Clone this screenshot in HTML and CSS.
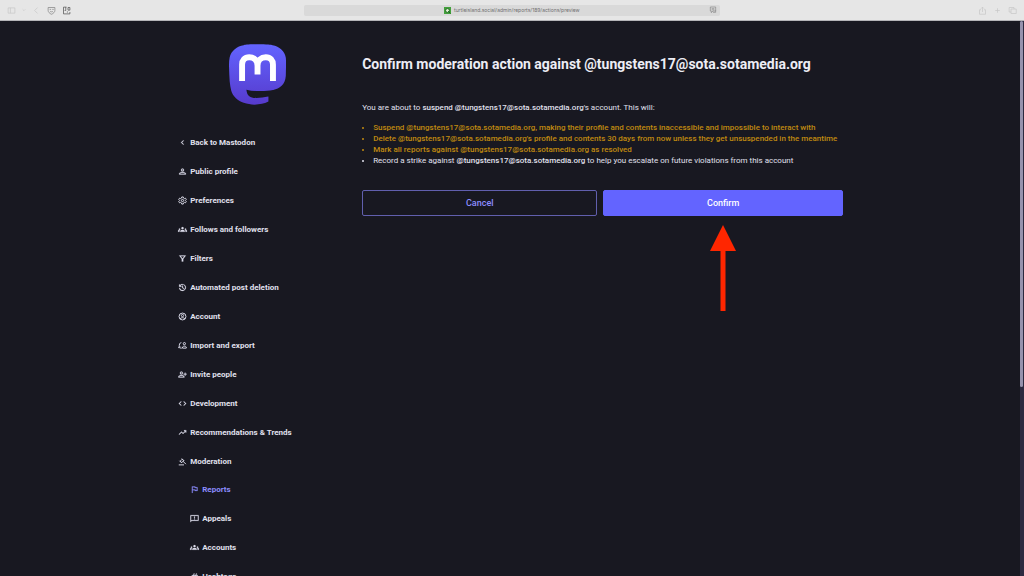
FILE: index.html
```
<!DOCTYPE html>
<html lang="en">
<head>
<meta charset="utf-8">
<meta name="viewport" content="width=device-width, initial-scale=1">
<title>Confirm moderation action</title>
<link rel="stylesheet" href="styles.css">
</head>
<body>
<header class="toolbar">
  <div class="tools">
    <svg class="tool faint" viewBox="0 0 12 12"><path d="M1.500 2.500h9v7h-9zM4.500 2.500v7"/></svg>
    <svg class="tool tiny" viewBox="0 0 12 12"><path d="M2 4l4 4 4-4"/></svg>
    <svg class="tool faint" viewBox="0 0 12 12"><path d="M7.500 2L3.500 6l4 4"/></svg>
    <svg class="tool shield" viewBox="0 0 12 12"><path d="M1.500 2h9v4c0 2-2 4-4.500 5-2.500-1-4.500-3-4.500-5zM3.500 4.500h2M7 4.500h2M4 7c1 1 3 1 4 0"/></svg>
    <svg class="tool dark" viewBox="0 0 12 12"><path d="M6 1.500H2v9h8.500V8M5 1.500v4.500H3.500M8 2h2.500v3.500H8zM6.500 8h1.500"/></svg>
  </div>
  <div class="address">
    <svg class="favicon" viewBox="0 0 12 12"><path fill="#43a03c" d="M0 0h12v12H0z"/><circle cx="6" cy="6" r="3.300" fill="#e7f2d8" stroke="#17631c" stroke-width="1.500"/><path d="M7 7l4 4" stroke="#17631c" stroke-width="1.500"/></svg>
    <span class="url">turtleisland.social/admin/reports/189/actions/preview</span>
    <svg class="tool translate" viewBox="0 0 12 12"><path d="M2 1.500h8v6H6L3.500 10V7.500H2zM4 4h4M4 5.800h4M6 9.500h4V7"/></svg>
  </div>
  <div class="tools tools-end">
    <svg class="tool faint" viewBox="0 0 12 12"><path d="M4 5H2v6h8V5H8M6 8V1.500M4 3.500l2-2 2 2"/></svg>
    <svg class="tool faint" viewBox="0 0 12 12"><path d="M6 3v6M3 6h6"/></svg>
    <svg class="tool faint" viewBox="0 0 12 12"><path d="M4 4h7v6H4zM4 8H1.500V2H8v2"/></svg>
  </div>
</header>
<div class="page">
  <aside class="sidebar">
    <a class="logo-link" href="#" aria-label="Mastodon">
      <svg class="logo" viewBox="0.640 0 22.700 24">
        <defs><linearGradient id="brand" x1="0" y1="0" x2="0" y2="1"><stop offset="0" stop-color="#6364ff"/><stop offset="1" stop-color="#563acc"/></linearGradient></defs>
        <path fill="url(#brand)" d="M23.268 5.313c-.35-2.578-2.617-4.61-5.304-5.004C17.51.242 15.792 0 11.813 0h-.03c-3.98 0-4.835.242-5.288.309C3.882.692 1.496 2.518.917 5.127.64 6.412.61 7.837.661 9.143c.074 1.874.088 3.745.26 5.611.118 1.24.325 2.47.62 3.68.55 2.237 2.777 4.098 4.96 4.857 2.336.792 4.849.923 7.256.38.265-.061.527-.132.786-.213.585-.184 1.27-.39 1.774-.753a.057.057 0 0 0 .023-.043v-1.809a.052.052 0 0 0-.02-.041.053.053 0 0 0-.046-.01 20.282 20.282 0 0 1-4.709.545c-2.73 0-3.463-1.284-3.674-1.818a5.593 5.593 0 0 1-.319-1.433.053.053 0 0 1 .066-.054c1.517.363 3.072.546 4.632.546.376 0 .75 0 1.125-.01 1.57-.044 3.224-.124 4.768-.422.038-.008.077-.015.11-.024 2.435-.464 4.753-1.92 4.989-5.604.008-.145.03-1.52.03-1.67.002-.512.167-3.63-.024-5.545z"/>
        <path fill="none" stroke="#fff" stroke-width="2.350" d="M5.850 14.600V8.100c0-1.800 1-2.950 2.850-2.950C10.500 5.150 12 6.200 12 8.500v3.500M12 8.500c0-2.300 1.500-3.350 3.300-3.350 1.850 0 2.850 1.150 2.850 2.950v6.500"/>
      </svg>
    </a>
    <nav>
      <ul class="menu">
        <li><a href="#"><svg class="icon" viewBox="0 0 24 24"><path d="M15.400 7.400L14 6l-6 6 6 6 1.400-1.400L10.800 12z"/></svg>Back to Mastodon</a></li>
        <li><a href="#"><svg class="icon" viewBox="0 0 24 24"><path d="M12 4a4 4 0 1 0 0 8 4 4 0 0 0 0-8zm0 2a2 2 0 1 1 0 4 2 2 0 0 1 0-4zm0 7c-3 0-9 1.300-9 4.500V20h18v-2.500C21 14.300 15 13 12 13zm0 2c3 0 6.500 1.300 7 3H5c.5-1.700 4-3 7-3z"/></svg>Public profile</a></li>
        <li><a href="#"><svg class="icon line" viewBox="0 0 24 24"><path d="M10 2.500h4l.6 3 2.400 1.400 3-1 2 3.500L19.700 12l2.300 2.600-2 3.500-3-1-2.400 1.400-.6 3h-4l-.6-3L7 17.100l-3 1-2-3.500L4.300 12 2 9.400l2-3.500 3 1 2.400-1.400z"/><circle cx="12" cy="12" r="3"/></svg>Preferences</a></li>
        <li><a href="#"><svg class="icon wide" viewBox="0 0 24 24"><use href="#groups"/></svg>Follows and followers</a></li>
        <li><a href="#"><svg class="icon" viewBox="0 0 24 24"><path d="M3 4h18l-7 9v7h-4v-7zm4.100 2L12 12.300 16.900 6z" fill-rule="evenodd"/></svg>Filters</a></li>
        <li><a href="#"><svg class="icon" viewBox="0 0 24 24"><path d="M12 21a9 9 0 0 1-8.900-8h2A7 7 0 1 0 7 7l-.8 1H9v2H3V4h2v2.300A9 9 0 1 1 12 21zm2.800-4.800L11 12.400V7h2v4.600l3.200 3.200z"/></svg>Automated post deletion</a></li>
        <li><a href="#"><svg class="icon line" viewBox="0 0 24 24"><circle cx="12" cy="12" r="9.200"/><circle cx="12" cy="9.500" r="3"/><path d="M5.500 18c3-3.700 10-3.700 13 0"/></svg>Account</a></li>
        <li><a href="#"><svg class="icon line" viewBox="0 0 24 24"><path d="M9 4C4 5 3 9 3.500 17M0 15l3.500 4L7 15M6 19h4"/><circle cx="17" cy="7" r="3"/><path d="M12 19v-3c2-3 8-3 10 0v3z"/></svg>Import and export</a></li>
        <li><a href="#"><svg class="icon" viewBox="0 0 24 24"><path d="M9 4a4 4 0 1 0 0 8 4 4 0 0 0 0-8zm0 2a2 2 0 1 1 0 4 2 2 0 0 1 0-4zm0 7c-3 0-8 1.300-8 4.500V20h16v-2.500C17 14.300 12 13 9 13zm0 2c3 0 5.500 1.300 6 3H3c.5-1.700 3-3 6-3zM18 7h2v3h3v2h-3v3h-2v-3h-3v-2h3z"/></svg>Invite people</a></li>
        <li><a href="#"><svg class="icon" viewBox="0 0 24 24"><path d="M8 18l-6-6 6-6 1.400 1.400L4.800 12l4.600 4.600zm8 0l-1.400-1.400 4.600-4.600-4.600-4.600L16 6l6 6z"/></svg>Development</a></li>
        <li><a href="#"><svg class="icon" viewBox="0 0 24 24"><path d="M3.400 18L2 16.600l7.400-7.450 4 4L18.600 8H16V6h6v6h-2V9.400L13.400 16l-4-4z"/></svg>Recommendations &amp; Trends</a></li>
        <li>
          <a href="#"><svg class="icon line" viewBox="0 0 24 24"><path d="M2 21h14M4 10l6 6M10 4l6 6M6 11l5-5 4 4-5 5zM13 11l8 8"/></svg>Moderation</a>
          <ul class="menu submenu">
            <li><a class="current" href="#" aria-current="page"><svg class="icon" viewBox="0 0 24 24"><path d="M5 21V4h9l.4 2H20v10h-7l-.4-2H7v7zm9.650-7H18V8h-5.250l-.4-2H7v6h7.250z" fill-rule="evenodd"/></svg>Reports</a></li>
            <li><a href="#"><svg class="icon" viewBox="0 0 24 24"><path d="M1 22V3h22v15H5zm2-4.600L4.200 16H21V5H3zM11 12.500h2v2h-2zM11 6.500h2v5h-2z" fill-rule="evenodd"/></svg>Appeals</a></li>
            <li><a href="#"><svg class="icon wide" viewBox="0 0 24 24"><g id="groups"><circle cx="12" cy="8.500" r="3"/><circle cx="4" cy="11" r="2"/><circle cx="20" cy="11" r="2"/><path d="M6 18v-2c0-4 12-4 12 0v2zM0 18v-2c0-2 2-3 4.800-2.500-.6.8-.8 1.500-.8 4.500zM24 18v-2c0-2-2-3-4.800-2.500.6.800.8 1.500.8 4.500z"/></g></svg>Accounts</a></li>
            <li><a href="#"><svg class="icon" viewBox="0 0 24 24"><path d="M6 20l1-4H3l.5-2h4l1-4h-4L5 8h4l1-4h2l-1 4h4l1-4h2l-1 4h4l-.5 2h-4l-1 4h4l-.5 2h-4l-1 4h-2l1-4H9l-1 4zm3.500-6h4l1-4h-4z" fill-rule="evenodd"/></svg>Hashtags</a></li>
          </ul>
        </li>
      </ul>
    </nav>
  </aside>
  <main class="content">
    <h1>Confirm moderation action against @tungstens17@sota.sotamedia.org</h1>
    <p class="lead">You are about to <strong>suspend @tungstens17@sota.sotamedia.org</strong>'s account. This will:</p>
    <ul class="effects">
      <li class="warning">Suspend @tungstens17@sota.sotamedia.org, making their profile and contents inaccessible and impossible to interact with</li>
      <li class="warning">Delete @tungstens17@sota.sotamedia.org's profile and contents 30 days from now unless they get unsuspended in the meantime</li>
      <li class="warning">Mark all reports against @tungstens17@sota.sotamedia.org as resolved</li>
      <li>Record a strike against <strong>@tungstens17@sota.sotamedia.org</strong> to help you escalate on future violations from this account</li>
    </ul>
    <div class="actions">
      <button class="button secondary" type="button">Cancel</button>
      <button class="button" type="button">Confirm</button>
      <svg class="arrow" viewBox="0 0 26 86"><path fill="#ff2600" d="M13 0l13 26h-10.500v60h-5V26H0z"/></svg>
    </div>
  </main>
  <div class="scrollbar"><div class="thumb"></div></div>
</div>
</body>
</html>
```
FILE: styles.css
```
* { box-sizing: border-box; }

body {
  margin: 0;
  height: 100vh;
  display: flex;
  flex-direction: column;
  overflow: hidden;
  background: #181821;
  color: #e0e0ee;
  font-family: Roboto, "Liberation Sans", sans-serif;
  font-size: 8px;
  line-height: 11px;
}

ul { list-style: none; margin: 0; padding: 0; }
a { color: inherit; text-decoration: none; }

.toolbar {
  flex: none;
  height: 21px;
  display: grid;
  grid-template-columns: 1fr 416px 1fr;
  align-items: center;
  padding: 0 7px;
  background: #e6e6e6;
  border-bottom: 1px solid #b4b4b8;
}
.tools { display: flex; align-items: center; gap: 6px; }
.tools-end { justify-content: flex-end; }
.tool {
  width: 9px;
  height: 9px;
  fill: none;
  stroke: #858585;
  stroke-width: 1;
}
.faint { stroke: #c8c8c8; }
.tiny { width: 4px; height: 4px; stroke: #b4b4b4; }
.dark { stroke: #555; stroke-width: 1; }
.address {
  display: flex;
  align-items: center;
  justify-content: center;
  gap: 3px;
  height: 11px;
  padding: 0 3px 0 140px;
  border-radius: 2px;
  background: #d9d9d9;
}
.favicon { width: 7px; height: 7px; }
.url {
  flex: 1;
  color: #707070;
  font-family: Inter, sans-serif;
  font-size: 5px;
}
.translate { width: 8px; height: 8px; }

.page {
  flex: 1;
  min-height: 0;
  position: relative;
  display: grid;
  grid-template-columns: 1fr 173px 4fr;
}

.sidebar { grid-column: 2; }
.logo-link { display: block; padding: 23px 0 23px 2px; }
.logo { display: block; width: 57px; height: 61px; margin: 0 auto; }
.menu { display: flex; flex-direction: column; gap: 1px; }
.menu a {
  display: flex;
  align-items: center;
  gap: 3px;
  height: 28px;
  padding-left: 8px;
  font-weight: 700;
}
.submenu a { padding-left: 20px; }
.menu .current { color: #8c8dff; }
.icon { width: 9px; height: 9px; fill: currentColor; stroke: currentColor; stroke-width: 0.5; }
.line { fill: none; stroke-width: 2.5; }
.wide { overflow: visible; }

.content { padding: 33px 19px; }
h1 {
  margin: 0 0 28px;
  font-size: 14px;
  line-height: 20px;
  font-weight: 700;
  color: #ededf5;
}
.lead { margin: 0 0 9px; }
strong, .warning { font-weight: 500; }
.effects { list-style: disc; padding-left: 11px; }
.warning { color: #c08a10; }

.actions {
  display: grid;
  grid-template-columns: 49fr 50fr;
  column-gap: 6px;
  row-gap: 9px;
  max-width: 481px;
  margin-top: 24px;
}
.button {
  height: 26px;
  border: 1px solid #6364ff;
  border-radius: 2px;
  background: #6364ff;
  color: #fff;
  font: 500 9px Roboto, sans-serif;
}
.secondary { border-color: #615fae; background: transparent; color: #8c8dff; }
.arrow { grid-column: 2; justify-self: center; width: 26px; height: 86px; }

.scrollbar {
  position: absolute;
  top: 0;
  right: 0;
  bottom: 0;
  width: 4px;
  background: #2c2940;
}
.thumb { width: 3px; height: 66%; border-radius: 2px; background: #9692ad; }
```
